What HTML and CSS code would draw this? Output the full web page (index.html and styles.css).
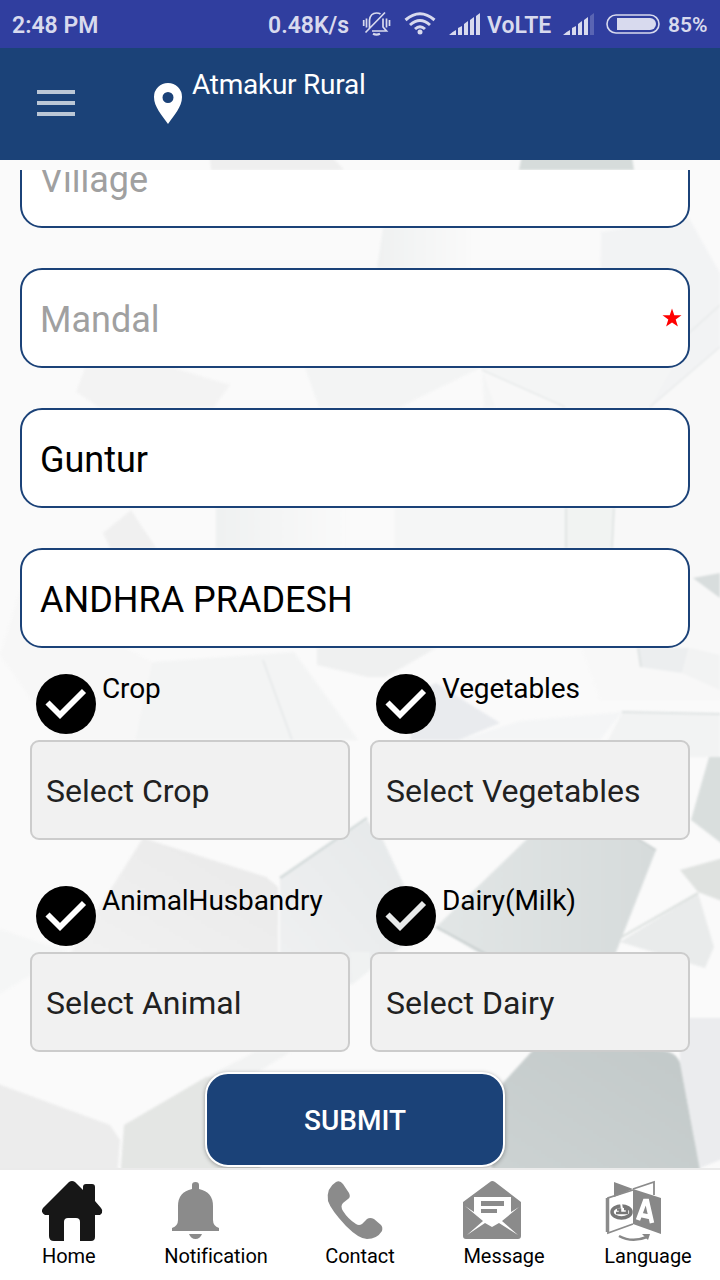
FILE: index.html
```html
<!DOCTYPE html>
<html lang="en">
<head>
<meta charset="utf-8">
<title>Atmakur Rural</title>
<link rel="stylesheet" href="styles.css">
</head>
<body>
<div class="app">
  <div class="status">
    <span class="time">2:48 PM</span>
    <span class="speed">0.48K/s</span>
    <svg class="mute" width="30" height="26" viewBox="0 0 30 26" fill="none" stroke="#d8daee" stroke-width="1.700"><path d="M7.500 18V10Q8.500 3 14.500 3Q17 3 18.500 4M21 8.500V17L24.500 21H10M3.500 22.500 23 2.500M1.700 10v6M4.500 8.500v9M24.500 8.500v9M27.500 10v6"/><path stroke-width="2.200" d="M11 23.800Q14.500 25.500 18 23.800"/></svg>
    <svg class="wifi" width="32" height="24" viewBox="0 0 32 24" fill="none" stroke="#d8daee" stroke-width="3"><path d="M1.500 9Q16-3.500 30.500 9M6 14Q16 5 26 14M11 18Q16 13.500 21 18"/><circle cx="16" cy="21" r="2.500" fill="#d8daee" stroke="none"/></svg>
    <svg class="signal" width="31" height="22" viewBox="0 0 31 22" fill="#d8daee"><path d="M0 22Q3 19 7 17V22ZM9 22V15l4-2V22ZM15 22V11l4-3V22ZM21 22V7l4-3V22ZM27 22V3l4-3V22Z"/></svg>
    <span class="volte">VoLTE</span>
    <svg class="signal2" width="31" height="22" viewBox="0 0 31 22" fill="#d8daee"><path d="M0 22Q3 19 7 17V22ZM9 22V15l4-2V22ZM15 22V11l4-3V22ZM21 22V7l4-3V22Z"/><path opacity=".25" d="M27 22V3l4-3V22Z"/></svg>
    <svg class="battery" width="54" height="20" viewBox="0 0 54 20"><rect x="1" y="1" width="52" height="18" rx="9" fill="none" stroke="#d8daee" stroke-width="1.600"/><path d="M11 4H44a6 6 0 0 1 0 12H11Z" fill="#d8daee"/></svg>
    <span class="percent">85%</span>
  </div>
  <header class="header">
    <svg class="menu" width="38" height="26" viewBox="0 0 38 26" fill="#bbc7d6"><path d="M0 0h38v4H0ZM0 11h38v4H0ZM0 22h38v4H0Z"/></svg>
    <svg class="pin" width="28" height="41" viewBox="0 0 28 41"><path fill="#fff" fill-rule="evenodd" d="M14 0A14 14 0 0 0 0 14C0 24 8 32 14 41C20 32 28 24 28 14A14 14 0 0 0 14 0ZM14 9a5.500 5.500 0 1 1 0 11a5.500 5.500 0 0 1 0-11Z"/></svg>
    <span class="place">Atmakur Rural</span>
  </header>

  <main class="content">
    <svg class="backdrop" width="720" height="1008" viewBox="0 160 720 1008">
      <defs>
        <linearGradient id="fadeRight"><stop offset="0" stop-color="#eff1f1"/><stop offset="1" stop-color="#fafafa"/></linearGradient>
        <linearGradient id="warm" x1="0" y1="1" x2="1" y2="0"><stop offset="0" stop-color="#f2f2f2"/><stop offset="1" stop-color="#e9e9e9"/></linearGradient>
        <linearGradient id="cool" x1="0" y1="1" x2="1" y2="0"><stop offset="0" stop-color="#f0f1f2"/><stop offset="1" stop-color="#e5e8e9"/></linearGradient>
        <linearGradient id="slate" x1="0" y1="0" x2="1" y2="0"><stop offset="0" stop-color="#e2e6e6"/><stop offset="1" stop-color="#d6dbdb"/></linearGradient>
        <linearGradient id="steel" x1="0" y1="1" x2="1" y2="0"><stop offset="0" stop-color="#cdd3d3"/><stop offset="1" stop-color="#c2c9c9"/></linearGradient>
      </defs>
      <rect y="160" width="720" height="1008" fill="#fafafa"/>
      <g class="facets">
      <path fill="#efefef" d="M209 150H326L344 170H211Z"/>
      <path fill="#d6dcdb" d="M523 150H631L634 170H519Z"/>
      <path fill="url(#fadeRight)" d="M383 228H470V268H377Z"/>
      <path fill="#f2f3f4" d="M601 232 689 218 720 273V407H599Z"/>
      <path fill="#f3f3f3" d="M85 368H174L230 385 214 407H99L76 392Z"/>
      <path fill="#f3f4f4" d="M305 368H480L400 407H319Z"/>
      <path fill="#f4f5f5" d="M482 368H672L650 407H484Z"/>
      <path fill="#f8f8f8" d="M482 370 565 407H650L720 347V700H600Z"/>
      <path stroke="#dfe3e3" fill="none" d="M720 305 689 333M720 347 650 407M482 370 565 407"/>
      <path fill="#f0f0f0" d="M131 510 156 548H110L103 533Z"/>
      <path fill="url(#fadeRight)" d="M216 508H345V548H216Z"/>
      <path fill="#f5f6f6" d="M395 508H565V548H395Z"/>
      <path fill="#f1f3f2" d="M565 508H614L611 548H565Z"/>
      <path stroke="#dce1e0" stroke-width="1.500" d="M566 508V548M614 508 612 548"/>
      <path fill="#d8dddd" d="M693 578 720 573V598Z"/>
      <path fill="#f7f7f7" d="M20 590 152 662 135 740H60L0 655Z"/>
      <path fill="#f3f4f4" d="M152 662 294 652 358 740H135Z"/>
      <path stroke="#e8eaeb" stroke-width="2" d="M263 660 292 740"/>
      <path fill="#eff0f0" d="M317 648H436L386 677H367L317 665Z"/>
      <path fill="#e9ebee" d="M436 683 500 723 459 740H410L420 690Z"/>
      <path fill="#f4f5f6" d="M520 721 622 712 600 740H459Z"/>
      <path fill="#eceeef" d="M638 648H689L682 673 640 667Z"/>
      <path fill="#f2f3f3" d="M690 648 720 655V690L682 673Z"/>
      <path fill="#f2f3f3" d="M622 712 720 713V757H600Z"/>
      <path stroke="#dfe3e3" stroke-width="2" d="M638 648 641 667M622 712 720 714"/>
      <path fill="#d9dedd" d="M709 757H730V850L691 820Z"/>
      <path fill="url(#warm)" d="M143 838 266 877 278 887V960H66Z"/>
      <path fill="url(#cool)" d="M280 877 367 820 383 840 404 885 418 935 349 985 280 960Z"/>
      <path stroke="#d3dada" stroke-width="2.500" d="M280 878 367 818"/>
      <path fill="url(#slate)" d="M528 838H638L656 850 613 960H490L436 927Z"/>
      <path stroke="#cbd1d1" stroke-width="2" fill="none" d="M638 839 656 850M436 927 486 954"/>
      <path fill="#dfe2e0" d="M680 870 730 856V904L698 892Z"/>
      <path fill="#e9ebeb" d="M698 893 714 947 705 968 620 942Z"/>
      <path stroke="#d8dddb" stroke-width="2" d="M620 938 698 893"/>
      <path fill="#f5f6f6" d="M-10 926 69 952 -10 1000Z"/>
      <path fill="#f0f2f2" d="M352 985 370 970V952H350Z"/>
      <path fill="#ebecee" d="M680 1018H730V1156L700 1168 680 1063Z"/>
      <path fill="#f2f3f3" d="M206 1077 255 1052 290 1052 250 1077Z"/>
      <path fill="#ececec" d="M-10 1081 110 1125 120 1140 117 1180H-10Z"/>
      <path fill="#e4e6e4" d="M124 1125 206 1077H260V1180H120Z"/>
      <path fill="url(#steel)" d="M533 1050H655Q676 1050 680 1063L702 1180H490L503 1083Z"/>
      </g>
    </svg>
    <div class="scroller">
      <div class="fields">
        <div class="field hint">Village</div>
        <div class="field hint">Mandal<svg class="star" width="20" height="20" viewBox="0 0 20 20"><path fill="#f00" d="M10 .5 12.300 7.300H19.500L13.700 11.600 15.900 18.600 10 14.400 4.100 18.600 6.300 11.600 .5 7.300H7.700Z"/></svg></div>
        <div class="field">Guntur</div>
        <div class="field">ANDHRA PRADESH</div>
      </div>
      <div class="grid">
        <div class="group">
          <div class="check"><svg width="60" height="60" viewBox="0 0 60 60"><circle cx="30" cy="30" r="30"/><path d="M11.500 28.500 24 41 48 17" fill="none" stroke="#fff" stroke-width="5.800"/></svg><span>Crop</span></div>
          <div class="select">Select Crop</div>
        </div>
        <div class="group">
          <div class="check"><svg width="60" height="60" viewBox="0 0 60 60"><circle cx="30" cy="30" r="30"/><path d="M11.500 28.500 24 41 48 17" fill="none" stroke="#fff" stroke-width="5.800"/></svg><span>Vegetables</span></div>
          <div class="select">Select Vegetables</div>
        </div>
        <div class="group">
          <div class="check"><svg width="60" height="60" viewBox="0 0 60 60"><circle cx="30" cy="30" r="30"/><path d="M11.500 28.500 24 41 48 17" fill="none" stroke="#fff" stroke-width="5.800"/></svg><span>AnimalHusbandry</span></div>
          <div class="select">Select Animal</div>
        </div>
        <div class="group">
          <div class="check"><svg width="60" height="60" viewBox="0 0 60 60"><circle cx="30" cy="30" r="30"/><path d="M11.500 28.500 24 41 48 17" fill="none" stroke="#e8eaea" stroke-width="5.800"/></svg><span>Dairy(Milk)</span></div>
          <div class="select">Select Dairy</div>
        </div>
      </div>
      <button class="submit">SUBMIT</button>
    </div>
  </main>

  <nav class="nav">
    <div class="tab"><div class="item">
      <svg width="60" height="60" viewBox="0 0 60 60"><path fill="#171717" d="M27 1Q30-1 33 1L41 9V6Q41 3 44 3H50Q53 3 53 6V20L59 27Q61 29 60 32L58 34H53V56Q53 60 49 60H38V41Q38 37 34 37H26Q22 37 22 41V60H12Q7 60 7 55V34H3Q-2 31 1 27Z"/></svg>
      <span>Home</span></div></div>
    <div class="tab"><div class="item">
      <svg width="60" height="60" viewBox="0 0 60 60" fill="#8b8b8b"><path d="M28 8V4Q28 1 31.500 1Q35 1 35 4V8Q49 11 49 25V39Q49 45 55 47V50H8V47Q14 45 14 39V25Q14 11 28 8ZM25 53H38Q36 58 31.500 58Q27 58 25 53Z"/></svg>
      <span>Notification</span></div></div>
    <div class="tab"><div class="item">
      <svg width="60" height="60" viewBox="0 0 60 60" fill="#8b8b8b"><path d="M11 1Q15-1 18 3L24 12Q26 16 23 18L18 22Q15 25 18 30Q23 38 31 43Q34 45 37 43L42 38Q45 36 49 38L56 44Q58 46 57 50Q52 58 42 58Q34 58 21 45Q6 29 3 20Q1 7 11 1Z"/></svg>
      <span>Contact</span></div></div>
    <div class="tab"><div class="item">
      <svg width="60" height="60" viewBox="0 0 60 60"><path fill="#8b8b8b" d="M0 21 27 1Q29-1 32 1L58 21V55Q58 58 55 58H3Q0 58 0 55Z"/><path fill="#fff" d="M11 16H48V31L56 26 39 40 55 54 36 42 29 46 22 42 4 54 20 40 2 25 11 31Z"/><path fill="#8b8b8b" d="M18 20H41V25H18ZM18 28H34V32H18Z"/></svg>
      <span>Message</span></div></div>
    <div class="tab"><div class="item">
      <svg width="60" height="60" viewBox="0 0 60 60"><path fill="#888" d="M10 1 29 8 10 16ZM29 8 57 17V53L29 43Z"/><path fill="none" stroke="#8b8b8b" stroke-width="1.800" d="M29 8 50 1V14M29 9 4 17V52L29 43"/><path stroke="#8b8b8b" stroke-width="3.500" d="M3.500 17V51"/><ellipse cx="17.500" cy="31" rx="9.500" ry="6" fill="none" stroke="#777" stroke-width="3.500"/><path fill="none" stroke="#fff" stroke-width="2" d="M17 22 18 28"/><path fill="none" stroke="#777" stroke-width="2.500" d="M12 32H24M13 28.500H16V32M20 28H23V32"/><path fill="none" stroke="#fff" stroke-width="4.500" d="M34 39 41 20H43L48 42M37 34 46 36"/><path fill="none" stroke="#888" stroke-width="2.500" d="M15 55Q28 62 43 56"/><path fill="#888" d="M38 53 46 53 44 59Z"/></svg>
      <span>Language</span></div></div>
  </nav>
</div>
</body>
</html>
```

FILE: styles.css
```css
* { box-sizing: border-box; }
body { margin: 0; font-family: Roboto, "Liberation Sans", sans-serif; color: #000; }
svg { display: block; flex: none; overflow: visible; }
.app { width: 720px; height: 1280px; display: flex; flex-direction: column; overflow: hidden; background: #fff; }

.status { height: 48px; flex: none; background: #303e9f; color: #d8daee; display: flex; align-items: center; padding: 2px 0 0 12px; font-size: 23px; font-weight: 600; white-space: nowrap; }
.time { width: 256px; }
.speed { width: 94px; }
.mute { margin-top: -5px; }
.wifi { margin: -4px 0 0 12px; }
.signal { margin: -2px 0 0 13px; }
.volte { width: 64px; margin-left: 7px; }
.signal2 { margin: -2px 0 0 12px; }
.battery { margin: -2px 0 0 12px; }
.percent { margin-left: 8px; font-size: 21px; }

.header { height: 112px; flex: none; background: #1b4278; display: flex; align-items: flex-start; padding-left: 37px; color: #fff; }
.menu { margin-top: 42px; }
.pin { margin: 35px 10px 0 79px; }
.place { margin-top: 20px; font-size: 28px; line-height: 33px; letter-spacing: -.25px; }

.content { flex: 1; min-height: 0; position: relative; padding-top: 10px; }
.backdrop { position: absolute; left: 0; top: 0; overflow: hidden; }
.facets { filter: blur(.8px); }
.scroller { position: relative; height: 100%; overflow: hidden; }
.fields { display: flex; flex-direction: column; gap: 40px; margin: -42px 30px 0 20px; }
.field { height: 100px; border: 2px solid #1b4278; border-radius: 22px; background: #fff; padding: 4px 6px 0 18px; font-size: 36px; display: flex; align-items: center; justify-content: space-between; }
.hint { color: #a0a0a0; }
.star { margin-top: -5px; }

.grid { display: grid; grid-template-columns: 320px 320px; column-gap: 20px; row-gap: 32px; padding: 22px 0 0 30px; }
.group { height: 180px; display: flex; flex-direction: column; }
.check { height: 70px; flex: none; display: flex; gap: 6px; padding: 4px 0 0 6px; font-size: 28px; line-height: 30px; letter-spacing: -.1px; }
.select { height: 100px; flex: none; margin-top: 0; border: 2px solid #ccc; border-radius: 9px; background: #f1f1f1; color: #212121; font-size: 32px; display: flex; align-items: center; padding: 2px 0 0 14px; }

.submit { display: block; width: 300px; height: 95px; margin: 10px 0 0 205px; padding: 2px 0 0; border: 2px solid #fff; border-radius: 23px; background: #1b4278; color: #fff; font: 500 28px Roboto, sans-serif; box-shadow: 0 1px 4px rgba(0, 0, 0, .35); }

.nav { height: 112px; flex: none; border-top: 2px solid #ebebeb; background: #fff; display: grid; grid-template-columns: repeat(5, 144px); padding-top: 11px; }
.tab { display: flex; justify-content: center; }
.item { display: flex; flex-direction: column; align-items: flex-start; font-size: 20px; line-height: 24px; gap: 3px; letter-spacing: -.05px; }
```
